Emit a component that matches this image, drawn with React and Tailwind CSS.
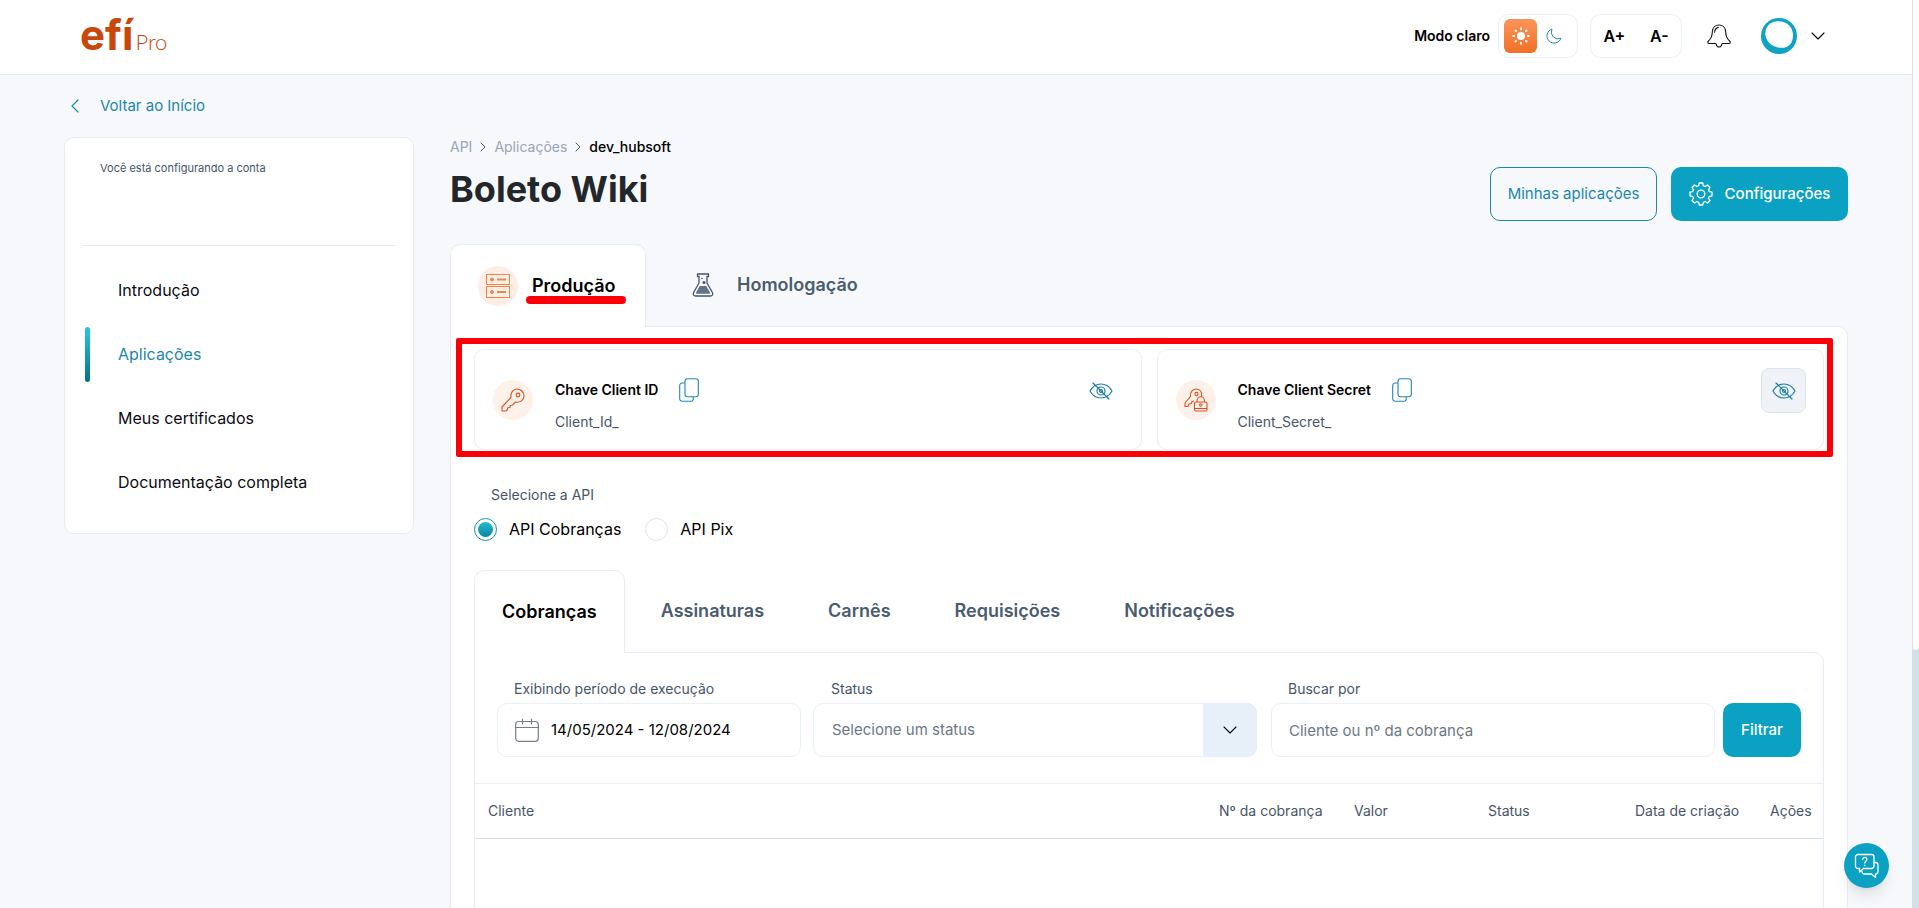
import { useState } from "react";

const NAV_ITEMS = ["Introdução", "Aplicações", "Meus certificados", "Documentação completa"];

const API_TABS = ["Cobranças", "Assinaturas", "Carnês", "Requisições", "Notificações"];

function ChevronDown({ className }) {
  return (
    <svg viewBox="0 0 14 8" className={className} fill="none" stroke="currentColor" strokeWidth="1.1" strokeLinecap="round" strokeLinejoin="round">
      <path d="M1 1l6 6 6-6" />
    </svg>
  );
}

function ChevronRight() {
  return (
    <svg viewBox="0 0 6 10" className="h-2.5 w-1.5" fill="none" stroke="#475569" strokeWidth="1" strokeLinecap="round">
      <path d="M1 1l4 4-4 4" />
    </svg>
  );
}

function SunIcon() {
  return (
    <svg viewBox="0 0 18 18" className="h-[18px] w-[18px]" stroke="#fff" strokeWidth="2" strokeLinecap="round">
      <circle cx="9" cy="9" r="4" fill="#fff" stroke="none" />
      <path d="M9 1.2v1M9 15.8v1M1.2 9h1M15.8 9h1M3.5 3.5l.5.5M14 14l.5.5M3.5 14.5l.5-.5M14 4l.5-.5" />
    </svg>
  );
}

function MoonIcon() {
  return (
    <svg viewBox="0 0 16 16" className="h-4 w-4" fill="none" stroke="#2389ab" strokeWidth="1" strokeLinejoin="round">
      <path d="M6 1A7.2 7.2 0 1 0 15 10.2 6.8 6.8 0 0 1 6 1z" />
    </svg>
  );
}

function BellIcon() {
  return (
    <svg viewBox="0 0 24 24" className="h-6 w-6" fill="none" stroke="#111" strokeWidth="1.1" strokeLinecap="round" strokeLinejoin="round">
      <path d="M12 1C8.200 1 5.600 3.800 5.400 7.500 5.200 12 4 14.800 1.600 16.800c-.5.400-.8.800-.8 1.400 0 .800.500 1.300 1.400 1.300h6.200c.5 0 .7.300.8.800.300 1.300 1.500 2.700 2.800 2.700s2.500-1.400 2.800-2.700c.100-.500.300-.8.800-.8h6.200c.9 0 1.400-.5 1.400-1.300 0-.6-.3-1-.8-1.400C20 14.800 18.800 12 18.600 7.500 18.400 3.800 15.800 1 12 1z" />
      <path d="M7.600 8.200c.2-2.500 1.500-4.300 3.800-4.800" />
    </svg>
  );
}

function AvatarRing() {
  return (
    <svg viewBox="0 0 36 36" className="h-9 w-9">
      <circle cx="18" cy="18" r="18" fill="#0ea3c2" />
      <path d="M17 3.200C25.500 3 32 8.500 32 17.500c0 8-5 13-12.500 12.300C11 29 4.500 23.500 4.300 15.500 4.200 8.500 9.500 3.400 17 3.200z" fill="#fff" />
    </svg>
  );
}

function GearIcon() {
  return (
    <svg viewBox="0 0 24 24" className="h-6 w-6" fill="none" stroke="currentColor" strokeWidth="1.300" strokeLinejoin="round">
      <path d="M10.200 1h3.600l.5 2.700 1.900.8L18.500 3 21 5.500l-1.500 2.300.8 1.900 2.700.5v3.600l-2.700.5-.8 1.900 1.500 2.300-2.500 2.500-2.300-1.500-1.900.8-.5 2.700h-3.600l-.5-2.700-1.900-.8L5.500 21 3 18.500l1.500-2.300-.8-1.900L1 13.800v-3.600l2.700-.5.8-1.900L3 5.500 5.500 3l2.300 1.500 1.900-.8z" />
      <circle cx="12" cy="12" r="3.800" />
    </svg>
  );
}

function ServerIcon() {
  return (
    <svg viewBox="0 0 24 24" className="h-6 w-6" fill="none" stroke="#f0854a" strokeWidth="1">
      <rect x=".5" y=".5" width="23" height="10" />
      <rect x=".5" y="12.500" width="23" height="11" />
      <path d="M11 5.500h9M11 18h9" strokeWidth="1.800" />
      <circle cx="6" cy="5.500" r="1.500" fill="#f0854a" />
      <circle cx="6" cy="18" r="1.500" fill="#f0854a" />
    </svg>
  );
}

function FlaskIcon() {
  return (
    <svg viewBox="0 0 22 24" className="h-6 w-[22px]" fill="none" stroke="#475569" strokeWidth="1.300" strokeLinejoin="round">
      <path d="M5.500 1h11v2.500H15V10l5.400 9.500c1 2-.1 3.500-2.100 3.500H3.700c-2 0-3.100-1.500-2.100-3.500L7 10V3.500H5.500z" />
      <path d="M7.700 13h6.600l3.600 6.500c.4.700 0 1.300-.7 1.300H4.800c-.7 0-1.100-.6-.7-1.300z" fill="#64748b" stroke="none" />
      <circle cx="10" cy="5.500" r=".8" fill="#475569" stroke="none" />
      <circle cx="12" cy="9.500" r="1.500" fill="#475569" stroke="none" />
    </svg>
  );
}

function KeyIcon() {
  return (
    <svg viewBox="0 0 24 24" className="h-6 w-6" fill="none" stroke="#dd4f1c" strokeWidth="1.100" strokeLinejoin="round">
      <path d="M10 9.500C9.200 5 12 1 16 1c4 0 7 3 7 7s-4 7-8.500 6l-3.200 3.200-2 .3-.5 2-2 .2-.4 2L4.800 23H1v-4z" />
      <circle cx="17" cy="7" r="1.900" />
    </svg>
  );
}

function KeyLockIcon() {
  return (
    <svg viewBox="0 0 24 24" className="h-6 w-6" fill="none" stroke="#dd4f1c" strokeWidth="1.100" strokeLinejoin="round">
      <path d="M17.500 9c1-4.500-1.500-8-5-8C8.500 1 6 4 6.500 8.500L1 15v3.500h3L5 16l2.500-.5.500-2 2-.5" />
      <circle cx="12.500" cy="6" r="1.600" />
      <rect x="10.500" y="14" width="12.500" height="9" rx="1.500" />
      <path d="M13 14v-1.500a3.700 3.700 0 0 1 7.400 0V14M10.500 20.500H23" />
      <circle cx="16.800" cy="17" r="1.200" />
    </svg>
  );
}

function CopyIcon() {
  return (
    <svg viewBox="0 0 20 24" className="h-6 w-5" fill="none" stroke="#2389ab" strokeWidth="1.100" strokeLinejoin="round">
      <rect x="6" y=".7" width="13.300" height="18" rx="2.500" />
      <path d="M6 5H3.500A2.500 2.500 0 0 0 .7 7.500v13A2.500 2.500 0 0 0 3.200 23.300h8.600a2.500 2.500 0 0 0 2.500-2.500v-2" />
    </svg>
  );
}

function EyeOffIcon() {
  return (
    <svg viewBox="0 0 24 18" className="h-[18px] w-6" fill="none" stroke="#1f80a3" strokeWidth="1.200" strokeLinecap="round" strokeLinejoin="round">
      <path d="M1 9c2.500-4.500 6.200-7 11-7s8.500 2.500 11 7c-2.500 4.500-6.200 7-11 7S3.500 13.500 1 9z" />
      <circle cx="12" cy="9" r="4" />
      <circle cx="12" cy="9" r="1.500" />
      <path d="M4 1l16 16" />
    </svg>
  );
}

function CalendarIcon() {
  return (
    <svg viewBox="0 0 24 24" className="h-6 w-6 shrink-0" fill="none" stroke="#757f8a" strokeWidth="1.200" strokeLinecap="round">
      <rect x=".7" y="3.500" width="22.600" height="19.800" rx="3" />
      <path d="M.7 9.500h22.600M7.500 1v5M16.500 1v5" />
    </svg>
  );
}

function ChatIcon() {
  return (
    <svg viewBox="0 0 26 26" className="h-[26px] w-[26px]" fill="none" stroke="#fff" strokeWidth="1.300" strokeLinejoin="round" strokeLinecap="round">
      <path d="M4 1.500h13.500A2.500 2.500 0 0 1 20 4v9a2.500 2.500 0 0 1-2.500 2.500H9.500L5.500 19v-3.500H4A2.500 2.500 0 0 1 1.500 13V4A2.500 2.500 0 0 1 4 1.500z" />
      <path d="M20 9.500h1.500A2.500 2.500 0 0 1 24 12v6.500a2.500 2.500 0 0 1-2.500 2.500v3.500L17.500 21h-7A2.500 2.500 0 0 1 8 18.500" />
      <path d="M8.700 6.300c.2-2.700 4.300-2.500 4.200.2 0 1.500-2.100 1.600-2.100 3.500M10.800 12.200v.2" />
    </svg>
  );
}

function Header() {
  return (
    <header className="flex h-[75px] items-center justify-between border-b border-[#e6ecf2] bg-white pr-[87px] pb-0.5 pl-20">
      <a href="#inicio" aria-label="efí Pro" className="flex items-baseline gap-0.5 pb-0.5 text-[#c8480c]">
        <span className="text-[42px] leading-[48px] font-bold">efí</span>
        <span className="font-[Lato] text-[22px] font-light">Pro</span>
      </a>

      <div className="flex items-center text-black">
        <span className="mr-2 text-sm font-semibold">Modo claro</span>
        <div className="mr-3 flex h-11 w-20 items-center rounded-[10px] border border-[#e8f0f8] pl-[5px]">
          <button aria-label="Modo claro" className="flex h-[34px] w-[33px] items-center justify-center rounded-md bg-linear-to-b from-[#fb9459] to-[#f17022]">
            <SunIcon />
          </button>
          <button aria-label="Modo escuro" className="flex h-[34px] w-[33px] items-center justify-center">
            <MoonIcon />
          </button>
        </div>
        <div className="mr-[25px] flex h-11 w-[92px] items-center justify-around rounded-[10px] border border-[#e8f0f8] text-base font-semibold">
          <button aria-label="Aumentar fonte">A+</button>
          <button aria-label="Diminuir fonte">A-</button>
        </div>
        <button aria-label="Notificações" className="mr-[30px]">
          <BellIcon />
        </button>
        <button aria-label="Minha conta" className="flex items-center gap-3.5">
          <AvatarRing />
          <ChevronDown className="h-2 w-3.5" />
        </button>
      </div>
    </header>
  );
}

function Sidebar() {
  return (
    <aside className="rounded-[10px] border border-[#e6edf4] bg-white px-[17px] pb-[19px]">
      <div className="h-[108px] border-b border-[#e8ecf0] px-[18px] pt-5">
        <p className="text-[11px] leading-5 text-[#475569]">Você está configurando a conta</p>
      </div>
      <nav className="pt-3">
        {NAV_ITEMS.map((item) => {
          const active = item === "Aplicações";
          return (
            <a key={item} href="#" className="flex h-16 items-center pl-[3px]">
              <span className={active ? "mr-7 h-[55px] w-[5px] rounded-full bg-linear-to-b from-[#27cbe2] to-[#06708a]" : "mr-7 w-[5px]"} />
              <span className={active ? "text-base text-[#1b87a9]" : "text-base text-[#0b0b12]"}>{item}</span>
            </a>
          );
        })}
      </nav>
    </aside>
  );
}

function EnvTabs() {
  return (
    <div className="flex gap-[9px]">
      <button className="relative -mb-px flex h-[83px] min-w-[196px] items-center gap-3.5 rounded-t-[10px] border border-b-0 border-[#e6edf4] bg-white px-[27px] text-lg font-semibold text-black">
        <span className="flex h-10 w-10 items-center justify-center rounded-full bg-[#feeee5]">
          <ServerIcon />
        </span>
        <span className="relative">
          Produção
          <span className="absolute -right-2.5 -bottom-1 -left-1.5 h-2 rounded-full bg-[#fb0007]" />
        </span>
      </button>
      <button className="flex h-[82px] items-center gap-3.5 px-7 text-lg font-semibold text-[#4b5c6e]">
        <span className="flex w-10 justify-center">
          <FlaskIcon />
        </span>
        Homologação
      </button>
    </div>
  );
}

function CredentialCard({ icon, label, value, highlighted }) {
  return (
    <div className="flex h-[101px] items-start rounded-[10px] border border-[#e9eff4] pt-[18px] pr-[17px] pl-[18px]">
      <span className="mt-3 mr-[22px] flex h-10 w-10 items-center justify-center rounded-full bg-[#fef1ea]">{icon}</span>
      <div>
        <div className="flex h-11 items-center gap-[21px]">
          <span className="text-sm font-semibold text-black">{label}</span>
          <button aria-label={`Copiar ${label}`}>
            <CopyIcon />
          </button>
        </div>
        <p className="text-sm text-[#475569]">{value}</p>
      </div>
      <button
        aria-label={`Mostrar ${label}`}
        className={
          highlighted
            ? "ml-auto flex h-[45px] w-[45px] items-center justify-center rounded-lg border border-[#dde5ec] bg-[#eff3f8]"
            : "ml-auto flex h-[45px] w-[45px] items-center justify-center"
        }
      >
        <EyeOffIcon />
      </button>
    </div>
  );
}

function ApiRadio({ label, checked, onChange }) {
  return (
    <label className="flex items-center gap-3 text-base text-black">
      <input
        type="radio"
        name="api"
        checked={checked}
        onChange={onChange}
        className="h-[23px] w-[23px] appearance-none rounded-full border border-[#dde2e7] bg-clip-content p-[3px] checked:border-[#1591ad] checked:bg-linear-to-b checked:from-[#25c4dc] checked:to-[#087c98]"
      />
      {label}
    </label>
  );
}

function Filters() {
  return (
    <form className="flex items-end px-[22px] py-[26px]" onSubmit={(e) => e.preventDefault()}>
      <div className="mr-3 w-[304px]">
        <label htmlFor="periodo" className="mb-1 block pl-[17px] text-sm text-[#475569]">Exibindo período de execução</label>
        <div className="flex h-[54px] items-center gap-3 rounded-[10px] border border-[#e8f0f8] pl-[17px]">
          <CalendarIcon />
          <input id="periodo" type="text" defaultValue="14/05/2024 - 12/08/2024" className="w-full min-w-0 pr-3 text-[15px] text-black outline-none" />
        </div>
      </div>
      <div className="mr-3.5 flex-1">
        <label htmlFor="status" className="mb-1 block pl-[18px] text-sm text-[#475569]">Status</label>
        <div className="relative">
          <select id="status" className="h-[54px] w-full appearance-none rounded-[10px] border border-[#e8f0f8] bg-white pl-[18px] text-[15px] text-[#6b7885] outline-none">
            <option>Selecione um status</option>
          </select>
          <span className="pointer-events-none absolute inset-y-0 right-0 flex w-[54px] items-center justify-center rounded-r-[10px] bg-[#e7f0f8]">
            <ChevronDown className="h-2 w-3.5" />
          </span>
        </div>
      </div>
      <div className="mr-2 flex-1">
        <label htmlFor="busca" className="mb-1 block pl-[17px] text-sm text-[#475569]">Buscar por</label>
        <input id="busca" type="text" placeholder="Cliente ou nº da cobrança" className="h-[54px] w-full rounded-[10px] border border-[#e8f0f8] px-[17px] text-[15px] outline-none placeholder:text-[#6b7885]" />
      </div>
      <button type="submit" className="h-[54px] w-[78px] rounded-[10px] bg-[#0ba1c3] text-[15px] font-medium text-white">Filtrar</button>
    </form>
  );
}

function ChargesTable() {
  return (
    <table className="w-full table-fixed border-t border-[#e6edf4] text-left text-sm text-[#475569]">
      <thead>
        <tr className="h-[55px] border-b border-[#d9e1e8] [&>th]:pl-[13px] [&>th]:font-normal">
          <th>Cliente</th>
          <th className="w-[135px]">Nº da cobrança</th>
          <th className="w-[134px]">Valor</th>
          <th className="w-[147px]">Status</th>
          <th className="w-[135px]">Data de criação</th>
          <th className="w-[66px]">Ações</th>
        </tr>
      </thead>
      <tbody>
        <tr className="h-40">
          <td colSpan={6} />
        </tr>
      </tbody>
    </table>
  );
}

export default function App() {
  const [api, setApi] = useState("cobrancas");

  return (
    <div className="flex h-screen overflow-hidden bg-[#f6f8fc] font-[Inter,sans-serif]">
      <div className="min-w-0 flex-1 overflow-hidden">
        <Header />

        <div className="px-16">
          <a href="#inicio" className="flex h-[62px] items-center gap-[21px] pl-[7px] text-[15px] text-[#1b87a9]">
            <svg viewBox="0 0 8 14" className="h-3.5 w-2" fill="none" stroke="currentColor" strokeWidth="1.200" strokeLinecap="round">
              <path d="M7 1L1 7l6 6" />
            </svg>
            Voltar ao Início
          </a>

          <div className="grid grid-cols-[350px_1fr] items-start gap-9">
            <Sidebar />

            <main className="min-w-0">
              <div className="mb-[23px] flex items-end justify-between">
                <div className="h-[84px]">
                  <nav className="flex items-center gap-2 text-sm text-[#9aa5b5]">
                    <a href="#api">API</a>
                    <ChevronRight />
                    <a href="#aplicacoes">Aplicações</a>
                    <ChevronRight />
                    <span className="font-medium text-black">dev_hubsoft</span>
                  </nav>
                  <h1 className="mt-3 text-4xl font-bold text-[#23272b]">Boleto Wiki</h1>
                </div>
                <div className="flex gap-3.5 text-[15px]">
                  <button className="h-[54px] w-[167px] rounded-[10px] border border-[#1b87a9] text-[#1b87a9]">Minhas aplicações</button>
                  <button className="flex h-[54px] w-[177px] items-center justify-center gap-3 rounded-[10px] bg-[#0ba1c3] font-medium text-white">
                    <GearIcon />
                    Configurações
                  </button>
                </div>
              </div>

              <EnvTabs />

              <section className="rounded-tr-[10px] border border-[#e6edf4] bg-white px-[23px] pt-[22px]">
                <div className="relative grid grid-cols-2 gap-[15px]">
                  <CredentialCard icon={<KeyIcon />} label="Chave Client ID" value="Client_Id_" />
                  <CredentialCard icon={<KeyLockIcon />} label="Chave Client Secret" value="Client_Secret_" highlighted />
                  <div className="pointer-events-none absolute -top-[11px] -right-[9px] -bottom-[7px] -left-[18px] rounded-xs border-6 border-[#fb0007]" />
                </div>

                <fieldset className="mt-[35px] mb-[29px]">
                  <legend className="mb-3 pl-[17px] text-sm text-[#475569]">Selecione a API</legend>
                  <div className="flex gap-6">
                    <ApiRadio label="API Cobranças" checked={api === "cobrancas"} onChange={() => setApi("cobrancas")} />
                    <ApiRadio label="API Pix" checked={api === "pix"} onChange={() => setApi("pix")} />
                  </div>
                </fieldset>

                <div className="flex gap-2 text-lg font-semibold">
                  {API_TABS.map((tab, i) => (
                    <button
                      key={tab}
                      className={
                        i === 0
                          ? "relative -mb-px h-[83px] rounded-t-[10px] border border-b-0 border-[#e6edf4] bg-white px-[27px] text-black"
                          : "h-[82px] px-7 text-[#4b5c6e]"
                      }
                    >
                      {tab}
                    </button>
                  ))}
                </div>
                <div className="rounded-tr-[10px] border border-[#e6edf4]">
                  <Filters />
                  <ChargesTable />
                </div>
              </section>
            </main>
          </div>
        </div>
      </div>

      <div className="w-[7px] bg-[#d5dfe8]">
        <div className="h-[650px] rounded-b-full border-l border-[#d5dfe8] bg-white" />
      </div>

      <button aria-label="Ajuda" className="fixed right-[30px] bottom-5 flex h-[45px] w-[45px] items-center justify-center rounded-full bg-[#0ba1c3] shadow-lg">
        <ChatIcon />
      </button>
    </div>
  );
}
